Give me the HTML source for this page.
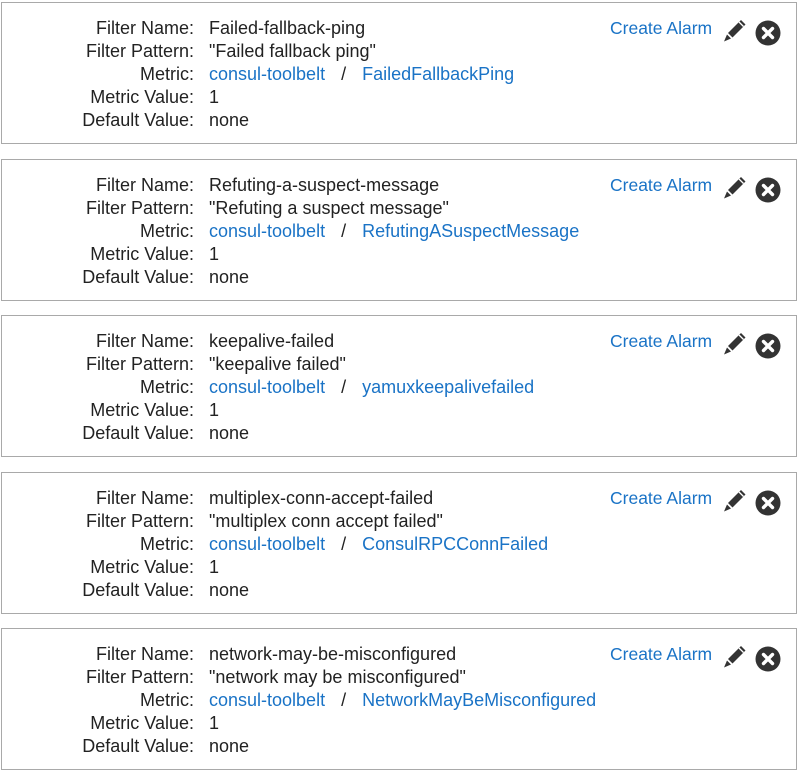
<!DOCTYPE html>
<html><head><style>
body{margin:0;background:#fff;font-family:"Liberation Sans",sans-serif;font-size:18px;color:#222;}
.box{position:absolute;left:1px;width:794px;height:140px;border:1px solid #a9a9a9;}
.row{position:absolute;left:0;height:23px;line-height:23px;white-space:nowrap}
.l{position:absolute;right:602px;text-align:right;width:200px}
.v{position:absolute;left:207px}
a{color:#1a73c6;text-decoration:none}
.ca{position:absolute;left:608px;top:14px;color:#1a73c6;line-height:23px;font-size:17.5px}
.pen{position:absolute;left:719px;top:14px}
.x{position:absolute;left:753px;top:17px}
</style></head><body>
<script>
const d=[["Failed-fallback-ping","\"Failed fallback ping\"","FailedFallbackPing"],
["Refuting-a-suspect-message","\"Refuting a suspect message\"","RefutingASuspectMessage"],
["keepalive-failed","\"keepalive failed\"","yamuxkeepalivefailed"],
["multiplex-conn-accept-failed","\"multiplex conn accept failed\"","ConsulRPCConnFailed"],
["network-may-be-misconfigured","\"network may be misconfigured\"","NetworkMayBeMisconfigured"]];
let h="";
d.forEach((r,i)=>{
const top=2+i*156.5;
const rows=[["Filter Name:",r[0]],["Filter Pattern:",r[1]],["Metric:",'<a>consul-toolbelt</a><span style="display:inline-block;width:37px;text-align:center">/</span><a>'+r[2]+'</a>'],["Metric Value:","1"],["Default Value:","none"]];
h+='<div class="box" style="top:'+top+'px">';
rows.forEach((x,j)=>{h+='<div class="row" style="top:'+(14+j*23)+'px;width:794px"><span class="l">'+x[0]+'</span><span class="v">'+x[1]+'</span></div>';});
h+='<span class="ca">Create Alarm</span>';
h+='<svg class="pen" width="27" height="27" viewBox="0 0 27 27"><path d="M20 3l4.5 4.5-13 13-4.5-4.5z" fill="#333"/><path d="M6 17.5l4 4-7 3z" fill="#333"/><path d="M18 5l4.5 4.5" stroke="#fff" stroke-width="1.3"/></svg>';
h+='<svg class="x" width="26" height="26" viewBox="0 0 26 26"><circle cx="13" cy="13" r="12.5" fill="#333"/><path d="M8.5 8.5l9 9M17.5 8.5l-9 9" stroke="#fff" stroke-width="3.4" stroke-linecap="round"/></svg>';
h+='</div>';});
document.write(h);
</script>
</body></html>
